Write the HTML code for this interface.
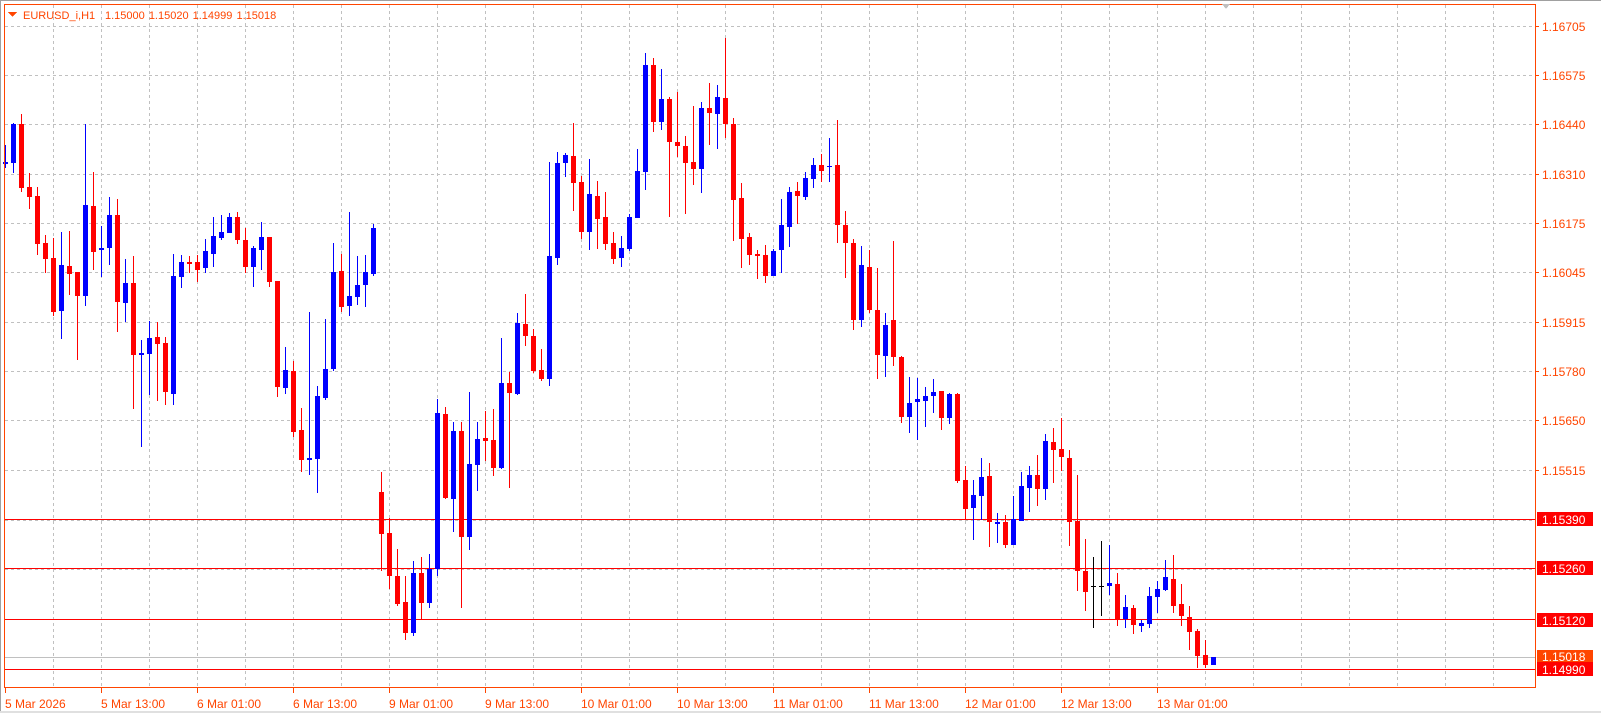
<!DOCTYPE html>
<html><head><meta charset="utf-8"><style>
html,body{margin:0;padding:0;background:#fff;}
body{width:1601px;height:713px;overflow:hidden;}
svg{display:block;font-family:"Liberation Sans",sans-serif;}
</style></head><body>
<svg width="1601" height="713" viewBox="0 0 1601 713" xmlns="http://www.w3.org/2000/svg" shape-rendering="crispEdges">
<rect x="0" y="0" width="1601" height="713" fill="#fff"/>
<rect x="0" y="0" width="1601" height="1" fill="#a0a0a0"/>
<rect x="0" y="0" width="1" height="713" fill="#a0a0a0"/>
<rect x="0" y="711" width="1601" height="2" fill="#e0e0e0"/>
<g stroke="#c0c0c0" stroke-width="1" stroke-dasharray="3,3" fill="none">
<path d="M5 26.5H1535M5 75.5H1535M5 124.5H1535M5 174.5H1535M5 223.5H1535M5 272.5H1535M5 322.5H1535M5 371.5H1535M5 420.5H1535M5 470.5H1535M5 520.5H1535M5 569.5H1535"/>
<path d="M53.5 5V688M101.5 5V688M149.5 5V688M197.5 5V688M245.5 5V688M293.5 5V688M341.5 5V688M389.5 5V688M437.5 5V688M485.5 5V688M533.5 5V688M581.5 5V688M629.5 5V688M677.5 5V688M725.5 5V688M773.5 5V688M821.5 5V688M869.5 5V688M917.5 5V688M965.5 5V688M1013.5 5V688M1061.5 5V688M1109.5 5V688M1157.5 5V688M1205.5 5V688M1253.5 5V688M1301.5 5V688M1349.5 5V688M1397.5 5V688M1445.5 5V688M1493.5 5V688"/>
</g>
<path d="M4 519.5H1535M4 568.5H1535M4 619.5H1535M4 669.5H1535" stroke="#ff0000" stroke-width="1"/>
<path d="M4 657.5H1535" stroke="#c0c0c0" stroke-width="1"/>
<g stroke="#ff0000" stroke-width="1" fill="none">
<path d="M21.5 114V192 M29.5 173V209 M37.5 187V255 M45.5 235V273 M53.5 238V316 M69.5 231V295 M77.5 272V360 M93.5 172V270 M117.5 199V332 M133.5 256V409 M157.5 322V401 M165.5 337V405 M189.5 256V273 M197.5 255V282 M237.5 212V244 M245.5 228V273 M269.5 237V287 M277.5 281V397 M293.5 361V437 M301.5 408V472 M341.5 254V312 M381.5 472V571 M389.5 518V589 M397.5 549V606 M405.5 576V640 M421.5 557V620 M445.5 407V499 M461.5 422V608 M485.5 411V461 M493.5 409V476 M509.5 372V488 M525.5 294V346 M533.5 329V373 M541.5 349V381 M573.5 123V211 M581.5 176V239 M597.5 181V249 M605.5 192V250 M613.5 232V264 M653.5 58V132 M669.5 97V217 M677.5 92V157 M685.5 136V214 M693.5 106V185 M709.5 83V145 M725.5 38V138 M733.5 118V241 M741.5 183V268 M749.5 233V265 M757.5 250V279 M765.5 245V283 M797.5 182V224 M821.5 154V182 M837.5 120V243 M845.5 211V278 M853.5 239V330 M869.5 250V313 M877.5 268V379 M893.5 241V366 M901.5 356V423 M941.5 391V430 M957.5 393V483 M965.5 466V519 M989.5 463V547 M1005.5 515V548 M1037.5 455V506 M1053.5 428V483 M1061.5 418V471 M1069.5 450V546 M1077.5 475V591 M1085.5 539V611 M1117.5 573V626 M1133.5 605V634 M1173.5 555V613 M1181.5 584V626 M1189.5 606V650 M1197.5 629V668 M1205.5 640V668"/>
</g>
<path fill="#ff0000" d="M19 124h5v64h-5z M27 187h5v10h-5z M35 196h5v48h-5z M43 243h5v16h-5z M51 258h5v54h-5z M67 266h5v8h-5z M75 272h5v24h-5z M91 206h5v46h-5z M115 215h5v87h-5z M131 283h5v72h-5z M155 337h5v7h-5z M163 343h5v49h-5z M187 262h5v2h-5z M195 262h5v8h-5z M235 217h5v23h-5z M243 240h5v27h-5z M267 237h5v45h-5z M275 281h5v106h-5z M291 371h5v61h-5z M299 430h5v30h-5z M339 271h5v36h-5z M379 492h5v42h-5z M387 533h5v43h-5z M395 576h5v28h-5z M403 602h5v31h-5z M419 573h5v30h-5z M443 414h5v84h-5z M459 431h5v106h-5z M483 438h5v3h-5z M491 440h5v28h-5z M507 383h5v10h-5z M523 324h5v12h-5z M531 336h5v35h-5z M539 370h5v9h-5z M571 156h5v27h-5z M579 182h5v50h-5z M595 196h5v23h-5z M603 217h5v27h-5z M611 243h5v16h-5z M651 65h5v57h-5z M667 99h5v43h-5z M675 142h5v4h-5z M683 146h5v17h-5z M691 162h5v7h-5z M707 108h5v5h-5z M723 98h5v26h-5z M731 124h5v76h-5z M739 198h5v41h-5z M747 237h5v18h-5z M755 254h5v2h-5z M763 255h5v21h-5z M795 191h5v5h-5z M819 165h5v6h-5z M835 165h5v60h-5z M843 225h5v18h-5z M851 243h5v77h-5z M867 267h5v43h-5z M875 310h5v45h-5z M891 320h5v37h-5z M899 357h5v60h-5z M939 391h5v27h-5z M955 394h5v87h-5z M963 480h5v29h-5z M987 476h5v46h-5z M1003 522h5v23h-5z M1035 475h5v14h-5z M1051 442h5v8h-5z M1059 449h5v8h-5z M1067 458h5v64h-5z M1075 521h5v50h-5z M1083 571h5v21h-5z M1115 584h5v35h-5z M1131 608h5v17h-5z M1171 579h5v27h-5z M1179 604h5v12h-5z M1187 617h5v15h-5z M1195 631h5v25h-5z M1203 655h5v10h-5z"/>
<g stroke="#0000ff" stroke-width="1" fill="none">
<path d="M5.5 145V168 M13.5 123V173 M61.5 232V339 M85.5 124V306 M101.5 226V277 M109.5 197V265 M125.5 259V322 M141.5 340V447 M149.5 321V395 M173.5 254V405 M181.5 255V288 M205.5 239V273 M213.5 217V267 M221.5 215V240 M229.5 213V233 M253.5 246V287 M261.5 222V270 M285.5 347V394 M309.5 312V475 M317.5 386V493 M325.5 319V400 M333.5 243V371 M349.5 212V316 M357.5 256V305 M365.5 255V307 M373.5 224V276 M413.5 561V636 M429.5 554V608 M437.5 399V576 M453.5 422V532 M469.5 392V550 M477.5 422V491 M501.5 338V469 M517.5 313V395 M549.5 162V386 M557.5 152V265 M565.5 153V177 M589.5 159V250 M621.5 236V267 M629.5 214V251 M637.5 149V218 M645.5 53V190 M661.5 69V130 M701.5 102V193 M717.5 85V149 M773.5 249V276 M781.5 199V273 M789.5 187V247 M805.5 172V200 M813.5 158V188 M829.5 138V182 M861.5 246V327 M885.5 313V377 M909.5 377V433 M917.5 378V440 M925.5 387V427 M933.5 379V413 M949.5 393V424 M973.5 480V540 M981.5 458V520 M997.5 513V543 M1013.5 496V545 M1021.5 472V521 M1029.5 466V512 M1045.5 434V500 M1109.5 545V595 M1125.5 595V628 M1141.5 620V632 M1149.5 587V628 M1157.5 581V613 M1165.5 560V591"/>
</g>
<path fill="#0000ff" d="M3 162h5v2h-5z M11 124h5v39h-5z M59 265h5v46h-5z M83 205h5v91h-5z M99 248h5v2h-5z M107 215h5v33h-5z M123 283h5v20h-5z M139 353h5v2h-5z M147 338h5v16h-5z M171 276h5v118h-5z M179 262h5v15h-5z M203 251h5v17h-5z M211 236h5v18h-5z M219 232h5v6h-5z M227 217h5v16h-5z M251 248h5v19h-5z M259 237h5v13h-5z M283 370h5v18h-5z M307 458h5v2h-5z M315 396h5v63h-5z M323 369h5v29h-5z M331 272h5v97h-5z M347 296h5v10h-5z M355 285h5v12h-5z M363 272h5v13h-5z M371 228h5v46h-5z M411 573h5v60h-5z M427 569h5v34h-5z M435 413h5v156h-5z M451 431h5v68h-5z M467 464h5v73h-5z M475 439h5v26h-5z M499 383h5v85h-5z M515 323h5v71h-5z M547 256h5v123h-5z M555 163h5v95h-5z M563 155h5v8h-5z M587 194h5v38h-5z M619 248h5v10h-5z M627 217h5v32h-5z M635 171h5v47h-5z M643 65h5v107h-5z M659 99h5v23h-5z M699 108h5v61h-5z M715 97h5v17h-5z M771 251h5v25h-5z M779 225h5v25h-5z M787 192h5v35h-5z M803 178h5v19h-5z M811 165h5v14h-5z M827 166h5v1h-5z M859 265h5v55h-5z M883 325h5v31h-5z M907 403h5v14h-5z M915 399h5v3h-5z M923 396h5v5h-5z M931 392h5v4h-5z M947 394h5v24h-5z M971 495h5v13h-5z M979 477h5v19h-5z M995 522h5v2h-5z M1011 519h5v26h-5z M1019 486h5v35h-5z M1027 475h5v13h-5z M1043 441h5v48h-5z M1107 583h5v3h-5z M1123 607h5v12h-5z M1139 623h5v3h-5z M1147 596h5v28h-5z M1155 589h5v8h-5z M1163 577h5v13h-5z M1211 657h5v8h-5z"/>
<path d="M1093.5 557V628 M1101.5 541V616" stroke="#000" stroke-width="1"/>
<path d="M1091 586h5v1h-5z M1099 586h5v1h-5z" fill="#000"/>
<rect x="4.5" y="4.5" width="1531" height="683" fill="none" stroke="#ff4500" stroke-width="1"/>
<path d="M1222 4h8l-4 5z" fill="#c0c0c0"/>
<path d="M8 12h9l-4.5 5z" fill="#ff4500"/>
<text x="23" y="19" font-size="11" fill="#ff4500">EURUSD_i,H1</text>
<text x="105" y="19" font-size="11" fill="#ff4500" word-spacing="1">1.15000 1.15020 1.14999 1.15018</text>
<g fill="#ff4500" font-size="12">
<path d="M1536 26.5h3M1536 75.5h3M1536 124.5h3M1536 174.5h3M1536 223.5h3M1536 272.5h3M1536 322.5h3M1536 371.5h3M1536 420.5h3M1536 470.5h3" stroke="#ff4500"/>
<text x="1542" y="31">1.16705</text>
<text x="1542" y="80">1.16575</text>
<text x="1542" y="129">1.16440</text>
<text x="1542" y="179">1.16310</text>
<text x="1542" y="228">1.16175</text>
<text x="1542" y="277">1.16045</text>
<text x="1542" y="327">1.15915</text>
<text x="1542" y="376">1.15780</text>
<text x="1542" y="425">1.15650</text>
<text x="1542" y="475">1.15515</text>
</g>
<rect x="1537" y="512" width="56" height="14" fill="#ff0000"/>
<rect x="1537" y="561" width="56" height="14" fill="#ff0000"/>
<rect x="1537" y="613" width="56" height="14" fill="#ff0000"/>
<rect x="1537" y="650" width="56" height="12" fill="#ff4500"/>
<rect x="1537" y="662" width="56" height="14" fill="#ff0000"/>
<g fill="#fff" font-size="12">
<text x="1542" y="524">1.15390</text>
<text x="1542" y="573">1.15260</text>
<text x="1542" y="625">1.15120</text>
<text x="1542" y="661">1.15018</text>
<text x="1542" y="674">1.14990</text>
</g>
<path stroke="#ff4500" stroke-width="1" d="M5.5 688V693M101.5 688V693M197.5 688V693M293.5 688V693M389.5 688V693M485.5 688V693M581.5 688V693M677.5 688V693M773.5 688V693M869.5 688V693M965.5 688V693M1061.5 688V693M1157.5 688V693"/>
<g fill="#ff4500" font-size="12">
<text x="5" y="708">5 Mar 2026</text>
<text x="101" y="708">5 Mar 13:00</text>
<text x="197" y="708">6 Mar 01:00</text>
<text x="293" y="708">6 Mar 13:00</text>
<text x="389" y="708">9 Mar 01:00</text>
<text x="485" y="708">9 Mar 13:00</text>
<text x="581" y="708">10 Mar 01:00</text>
<text x="677" y="708">10 Mar 13:00</text>
<text x="773" y="708">11 Mar 01:00</text>
<text x="869" y="708">11 Mar 13:00</text>
<text x="965" y="708">12 Mar 01:00</text>
<text x="1061" y="708">12 Mar 13:00</text>
<text x="1157" y="708">13 Mar 01:00</text>
</g>
</svg>
</body></html>
